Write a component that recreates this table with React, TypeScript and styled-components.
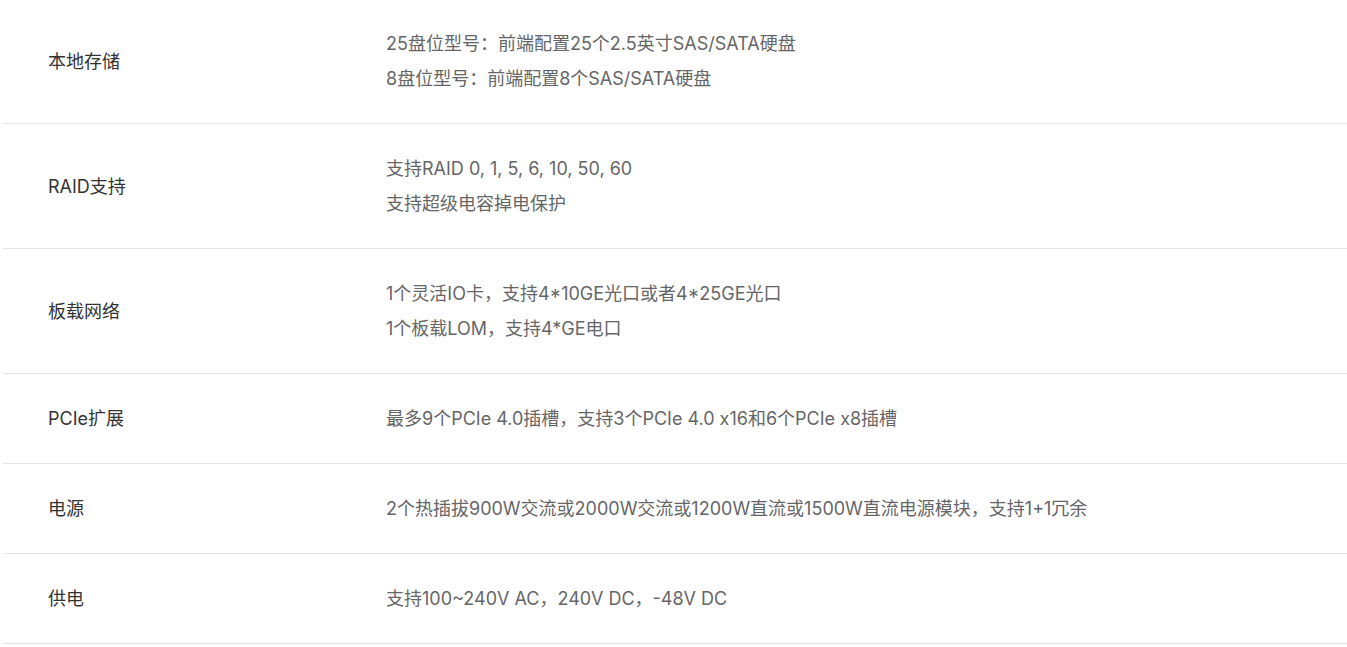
import React from "react";
import styled, { createGlobalStyle } from "styled-components";

const Global = createGlobalStyle`
  html, body { margin: 0; padding: 0; background: #fff; }
  body { font-family: Inter, "Noto Sans CJK SC", sans-serif; }
`;

const Table = styled.div`
  margin: -1px 0 0 3px;
  width: 1347px;
  display: flex;
  flex-direction: column;
`;

const Row = styled.div`
  display: grid;
  grid-template-columns: 383px 1fr;
  padding: 27px 0;
  border-bottom: 1px solid #e3e3e3;
  font-size: 18px;
  line-height: 35px;
`;

const Label = styled.div`
  padding-left: 45px;
  color: #333;
  align-self: center;
`;

const Values = styled.div`
  color: #666;
  display: flex;
  flex-direction: column;
`;

const rows: { label: string; values: string[] }[] = [
  {
    label: "本地存储",
    values: ["25盘位型号：前端配置25个2.5英寸SAS/SATA硬盘", "8盘位型号：前端配置8个SAS/SATA硬盘"],
  },
  { label: "RAID支持", values: ["支持RAID 0, 1, 5, 6, 10, 50, 60", "支持超级电容掉电保护"] },
  { label: "板载网络", values: ["1个灵活IO卡，支持4*10GE光口或者4*25GE光口", "1个板载LOM，支持4*GE电口"] },
  { label: "PCIe扩展", values: ["最多9个PCIe 4.0插槽，支持3个PCIe 4.0 x16和6个PCIe x8插槽"] },
  { label: "电源", values: ["2个热插拔900W交流或2000W交流或1200W直流或1500W直流电源模块，支持1+1冗余"] },
  { label: "供电", values: ["支持100~240V AC，240V DC，-48V DC"] },
];

export default function App() {
  return (
    <>
      <Global />
      <Table>
        {rows.map((r) => (
          <Row key={r.label}>
            <Label>{r.label}</Label>
            <Values>
              {r.values.map((v) => (
                <div key={v}>{v}</div>
              ))}
            </Values>
          </Row>
        ))}
      </Table>
    </>
  );
}
